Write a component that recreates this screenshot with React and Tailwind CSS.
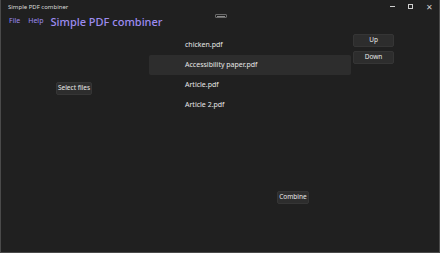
export default function App() {
  const files = ["chicken.pdf", "Accessibility paper.pdf", "Article.pdf", "Article 2.pdf"];
  const selected = 1;

  return (
    <div className="w-[440px] h-[253px] bg-[#202020] border-x border-b border-[#4a4a4a] flex flex-col overflow-hidden text-[#e8e8e8] font-['Noto_Sans','Open_Sans',sans-serif]">
      {/* title bar */}
      <div className="h-[13px] flex items-center pl-[7px] shrink-0">
        <span className="text-[6px] leading-none text-[#dcdcdc]">Simple PDF combiner</span>
        <div className="ml-auto flex items-center h-full">
          <div className="w-[18px] flex justify-center">
            <div className="w-[5px] h-px bg-[#cfcfcf]" />
          </div>
          <div className="w-[18px] flex justify-center">
            <div className="w-[5px] h-[5px] border border-[#cfcfcf]" />
          </div>
          <div className="w-[20px] flex justify-center text-[8px] leading-none text-[#cfcfcf]">✕</div>
        </div>
      </div>

      {/* header */}
      <div className="h-[17px] flex items-center shrink-0 relative">
        <span className="ml-[8px] text-[7px] text-[#9d8cf0]">File</span>
        <span className="ml-[8px] text-[7px] text-[#9d8cf0]">Help</span>
        <span className="ml-[7px] text-[11px] font-medium leading-none text-[#9d8cf0]">Simple PDF combiner</span>
        <div className="absolute left-[214px] top-[1px] w-[12px] h-[4px] border border-[#6a6a6a] rounded-[1px] flex items-center justify-center">
          <div className="w-[8px] h-px bg-[#8a8a8a]" />
        </div>
      </div>

      {/* main */}
      <div className="flex pt-[5px]">
        <div className="w-[148px] flex pl-[55px] pt-[47px]">
          <button className="w-[36px] h-[13px] bg-[#2d2d2d] border border-[#353535] rounded-[2px] text-[6.5px] leading-none text-[#e8e8e8]">
            Select files
          </button>
        </div>
        <div className="w-[202px] flex flex-col">
          <div className="flex flex-col">
            {files.map((f, i) => (
              <div
                key={f}
                className={`h-[20px] flex items-center pl-[36px] text-[7px] ${i === selected ? "bg-[#2d2d2d] rounded-[2px]" : ""}`}
              >
                {f}
              </div>
            ))}
          </div>
          <div className="pt-[66px] pl-[128px]">
            <button className="w-[32px] h-[13px] bg-[#2d2d2d] border border-[#353535] rounded-[2px] text-[6.5px] leading-none text-[#e8e8e8]">
              Combine
            </button>
          </div>
        </div>
        <div className="flex flex-col gap-[4px] pl-[2px] -mt-[1px]">
          <button className="w-[41px] h-[13px] bg-[#2d2d2d] border border-[#353535] rounded-[2px] text-[6.5px] leading-none text-[#e8e8e8]">
            Up
          </button>
          <button className="w-[41px] h-[13px] bg-[#2d2d2d] border border-[#353535] rounded-[2px] text-[6.5px] leading-none text-[#e8e8e8]">
            Down
          </button>
        </div>
      </div>
    </div>
  );
}
